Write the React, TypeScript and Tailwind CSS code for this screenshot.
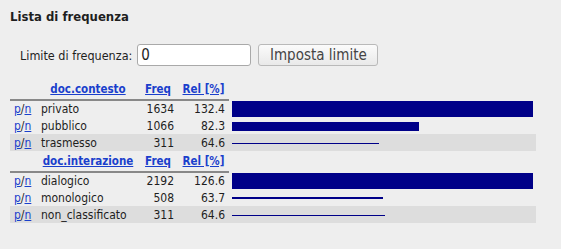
import React from 'react';

type Row = { label: string; freq: number; rel: string; w: number; h: number };

const groups: { attr: string; rows: Row[] }[] = [
    {
        attr: 'doc.contesto',
        rows: [
            { label: 'privato', freq: 1634, rel: '132.4', w: 301, h: 16 },
            { label: 'pubblico', freq: 1066, rel: '82.3', w: 187, h: 9 },
            { label: 'trasmesso', freq: 311, rel: '64.6', w: 147, h: 1 },
        ],
    },
    {
        attr: 'doc.interazione',
        rows: [
            { label: 'dialogico', freq: 2192, rel: '126.6', w: 301, h: 16 },
            { label: 'monologico', freq: 508, rel: '63.7', w: 151, h: 2 },
            { label: 'non_classificato', freq: 311, rel: '64.6', w: 153, h: 1 },
        ],
    },
];

const font = { fontFamily: '"DejaVu Sans Condensed", "DejaVu Sans", sans-serif' };

const App = () => {
    return (
        <div className="w-full min-h-screen bg-[#eeeeee] text-[#1e1e1e]" style={font}>
            <h2 className="pl-[10px] pt-[8px] text-[13px] leading-[17px] font-bold">Lista di frequenza</h2>

            <div className="flex items-center mt-[19px] pl-[20px] h-[22px]">
                <label className="text-[12.5px] leading-[15px] mr-[5px] pt-[1px]">Limite di frequenza:</label>
                <input
                    type="text"
                    defaultValue="0"
                    className="w-[114px] h-[22px] px-[3px] bg-white border border-[#a9a9a9] rounded-[3px] text-[15px] outline-none"
                    style={font}
                />
                <button className="ml-[7px] w-[120px] h-[22px] border border-[#b9b9b9] rounded-[3px] bg-gradient-to-b from-[#fbfbfb] to-[#e9e9e9] text-[15px] leading-[18px] text-[#444]">
                    Imposta limite
                </button>
            </div>

            <table className="ml-[10px] mt-[13px] table-fixed border-collapse text-[12px] leading-[14px]">
                <colgroup>
                    <col className="w-[28px]" />
                    <col className="w-[100px]" />
                    <col className="w-[40px]" />
                    <col className="w-[51px]" />
                    <col className="w-[307px]" />
                </colgroup>
                <tbody>
                    {groups.map((g) => (
                        <React.Fragment key={g.attr}>
                            <tr className="h-[21px]">
                                <th className="border-b-2 border-[#888888] p-0"></th>
                                {[g.attr, 'Freq', 'Rel [%]'].map((t) => (
                                    <th key={t} className="border-b-2 border-[#888888] p-0 pb-[3px] align-bottom text-center font-bold text-[11.5px]">
                                        <a href="#" className="text-[#1a3fcc] underline">{t}</a>
                                    </th>
                                ))}
                                <th className="p-0"></th>
                            </tr>
                            {g.rows.map((r, i) => (
                                <tr key={r.label} className={i === 2 ? 'h-[17px] bg-[#dddddd]' : 'h-[17px]'}>
                                    <td className="p-0 pl-[4px] whitespace-nowrap">
                                        <a href="#" className="text-[#1a3fcc] underline">p</a>/<a href="#" className="text-[#1a3fcc] underline">n</a>
                                    </td>
                                    <td className="p-0 pl-[3px] whitespace-nowrap">{r.label}</td>
                                    <td className="p-0 pr-[4px] text-right">{r.freq}</td>
                                    <td className="p-0 pr-[4px] text-right">{r.rel}</td>
                                    <td className="p-0">
                                        <div className="flex items-center h-[16px] mt-[1px] pl-[3px]">
                                            <div className="bg-[#000088]" style={{ width: r.w, height: r.h }} />
                                        </div>
                                    </td>
                                </tr>
                            ))}
                        </React.Fragment>
                    ))}
                </tbody>
            </table>
        </div>
    );
};

export default App;
